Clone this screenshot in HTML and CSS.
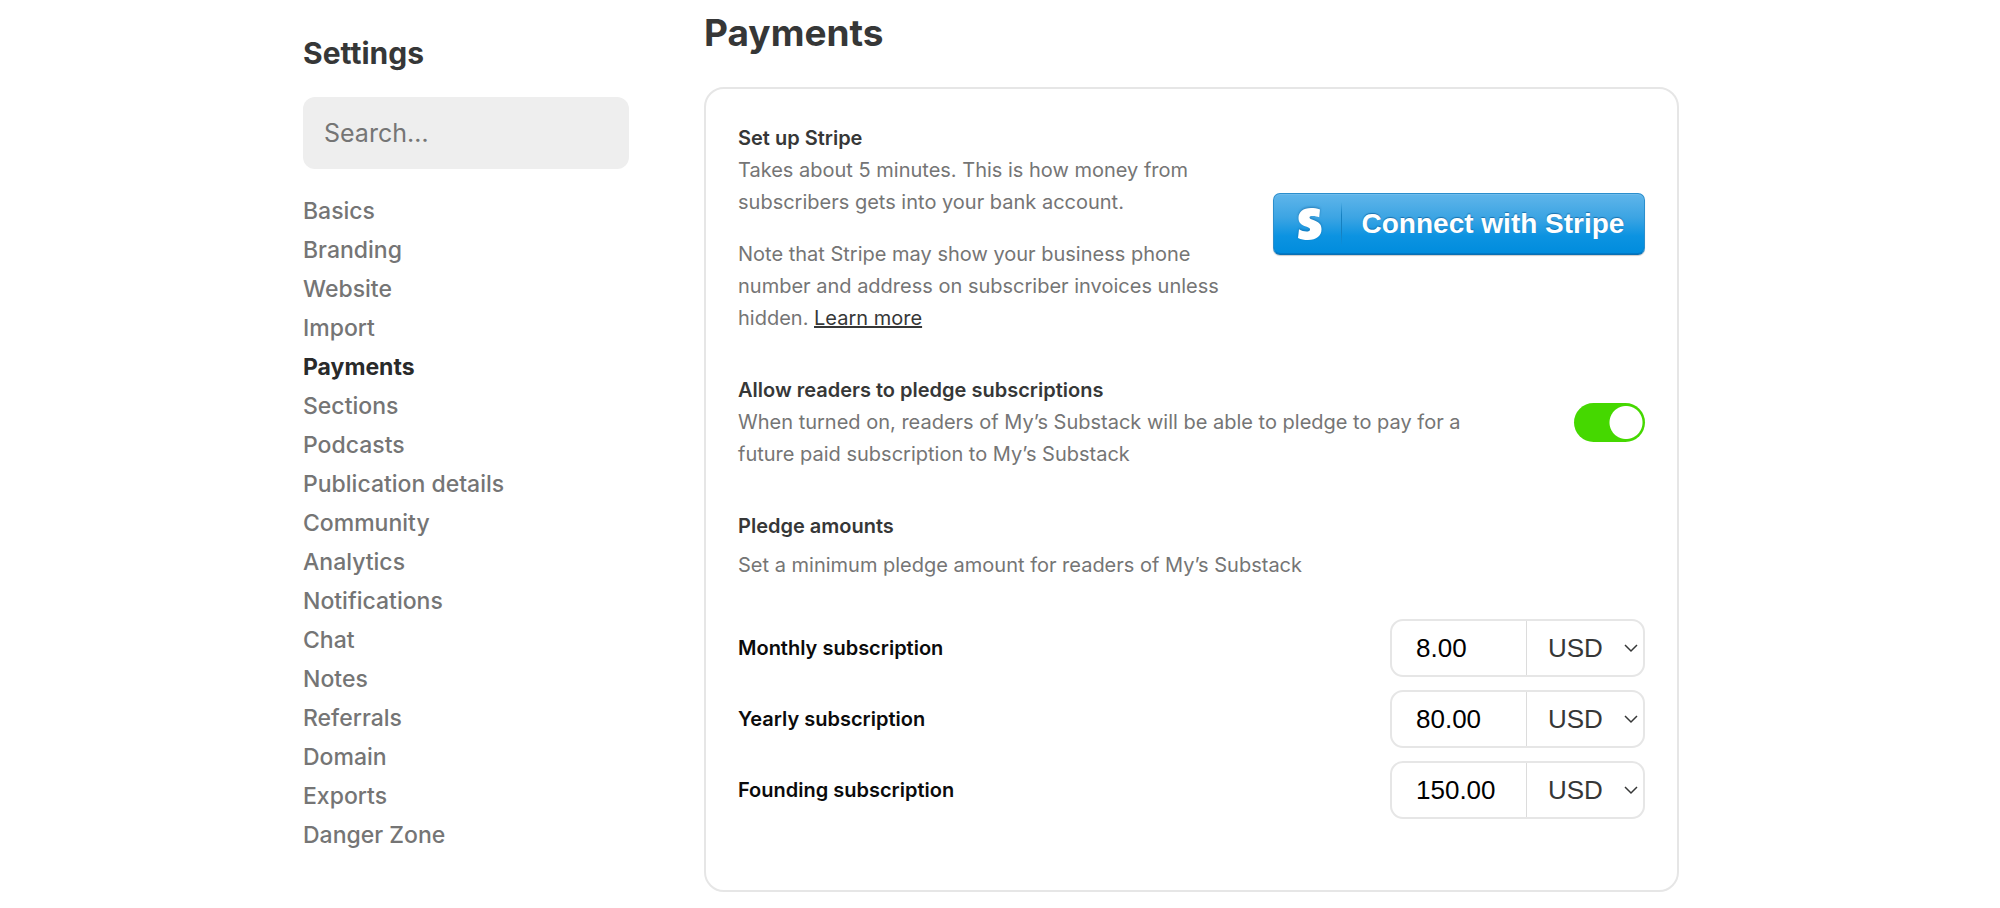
FILE: index.html
```html
<!DOCTYPE html>
<html lang="en">
<head>
    <meta charset="UTF-8">
    <meta name="viewport" content="width=device-width, initial-scale=1.0">
    <title>Payments - Settings</title>
    <link rel="stylesheet" href="styles.css">
</head>
<body>
    <div class="container">
        <aside class="sidebar">
            <h2>Settings</h2>
            <input class="search" type="search" placeholder="Search…" aria-label="Search settings">
            <nav class="nav">
                <a href="#basics">Basics</a>
                <a href="#branding">Branding</a>
                <a href="#website">Website</a>
                <a href="#import">Import</a>
                <a href="#payments" class="active">Payments</a>
                <a href="#sections">Sections</a>
                <a href="#podcasts">Podcasts</a>
                <a href="#publication">Publication details</a>
                <a href="#community">Community</a>
                <a href="#analytics">Analytics</a>
                <a href="#notifications">Notifications</a>
                <a href="#chat">Chat</a>
                <a href="#notes">Notes</a>
                <a href="#referrals">Referrals</a>
                <a href="#domain">Domain</a>
                <a href="#exports">Exports</a>
                <a href="#danger">Danger Zone</a>
            </nav>
        </aside>

        <main class="content" id="payments">
            <h1>Payments</h1>
            <div class="card">
                <section class="setting">
                    <div class="setting-text">
                        <h3>Set up Stripe</h3>
                        <p>Takes about 5 minutes. This is how money from subscribers gets into your bank account.</p>
                        <p class="note">Note that Stripe may show your business phone number and address on subscriber invoices unless hidden. <a href="#learn">Learn more</a></p>
                    </div>
                    <button type="button" class="stripe-button">
                        <span class="stripe-logo">
                            <svg width="26" height="34" viewBox="0 0 26 34" aria-hidden="true">
                                <path d="M23 2.5 C20 1.2 17 1 14 1 C6 1 1.5 5 1.5 11 C1.5 16 4.500 18 9 19.500 C12 20.500 13 21.200 13 22.500 C13 24 11.500 24.500 9.500 24.500 C7 24.500 4.500 23.700 2 22.300 L1 31 C4 32.400 7 33 11 33 C19.500 33 24.500 29 24.500 22.300 C24.500 17 21.500 15 17 13.300 C14 12.200 12.500 11.800 12.500 10.500 C12.500 9.300 13.800 8.900 15.800 8.900 C18 8.900 20.300 9.500 22.200 10.300 Z" fill="#fff"/>
                            </svg>
                        </span>
                        <span class="stripe-label">Connect with Stripe</span>
                    </button>
                </section>

                <section class="setting">
                    <div class="setting-text">
                        <h3><label for="pledges">Allow readers to pledge subscriptions</label></h3>
                        <p>When turned on, readers of My’s Substack will be able to pledge to pay for a future paid subscription to My’s Substack</p>
                    </div>
                    <input type="checkbox" class="toggle" id="pledges" checked>
                </section>

                <section class="pledge">
                    <h3>Pledge amounts</h3>
                    <p>Set a minimum pledge amount for readers of My’s Substack</p>
                    <div class="amounts">
                        <div class="amount-row">
                            <label for="monthly">Monthly subscription</label>
                            <div class="amount">
                                <input type="text" id="monthly" value="8.00">
                                <div class="currency">
                                    <select aria-label="Monthly currency"><option>USD</option></select>
                                    <svg width="16" height="10" viewBox="0 0 16 10" aria-hidden="true"><path d="M2 2 L8 8 L14 2"/></svg>
                                </div>
                            </div>
                        </div>
                        <div class="amount-row">
                            <label for="yearly">Yearly subscription</label>
                            <div class="amount">
                                <input type="text" id="yearly" value="80.00">
                                <div class="currency">
                                    <select aria-label="Yearly currency"><option>USD</option></select>
                                    <svg width="16" height="10" viewBox="0 0 16 10" aria-hidden="true"><path d="M2 2 L8 8 L14 2"/></svg>
                                </div>
                            </div>
                        </div>
                        <div class="amount-row">
                            <label for="founding">Founding subscription</label>
                            <div class="amount">
                                <input type="text" id="founding" value="150.00">
                                <div class="currency">
                                    <select aria-label="Founding currency"><option>USD</option></select>
                                    <svg width="16" height="10" viewBox="0 0 16 10" aria-hidden="true"><path d="M2 2 L8 8 L14 2"/></svg>
                                </div>
                            </div>
                        </div>
                    </div>
                </section>
            </div>
        </main>
    </div>
</body>
</html>
```

FILE: styles.css
```css
* {
    box-sizing: border-box;
}

body {
    margin: 0;
    padding: 0 18px 0 0;
    font-family: Inter, sans-serif;
    font-size: 20px;
    line-height: 32px;
    background: #fff;
    color: #363737;
}

h1, h2, h3, p {
    margin: 0;
}

.container {
    display: grid;
    grid-template-columns: 326px 1fr;
    gap: 75px;
    max-width: 1376px;
    margin: 0 auto;
}

/* sidebar */
.sidebar {
    padding-top: 33px;
}

.sidebar h2 {
    font-size: 30px;
    line-height: 40px;
}

.search {
    display: block;
    width: 100%;
    height: 72px;
    margin: 24px 0 23px;
    padding: 0 21px;
    border: none;
    border-radius: 12px;
    background: #eee;
    font-family: inherit;
    font-size: 25px;
    color: #363737;
}

.search::placeholder {
    color: #757575;
}

.nav {
    display: flex;
    flex-direction: column;
}

.nav a {
    font-size: 23px;
    line-height: 39px;
    font-weight: 500;
    color: #757575;
    text-decoration: none;
}

.nav a.active {
    font-weight: 700;
    color: #292a2a;
}

/* main column */
.content h1 {
    padding: 12px 0 33px;
    font-size: 37px;
    line-height: 42px;
}

.card {
    display: flex;
    flex-direction: column;
    gap: 40px;
    padding: 33px 32px 71px;
    border: 2px solid #e6e6e6;
    border-radius: 20px;
}

.card h3 {
    font-size: 20px;
    font-weight: 600;
}

.card p {
    color: #757575;
}

.setting {
    display: flex;
    align-items: center;
    justify-content: space-between;
    gap: 40px;
}

.setting-text {
    max-width: 760px;
}

.note {
    padding-top: 20px;
}

.note a {
    color: #363737;
}

.stripe-button {
    display: flex;
    align-items: center;
    flex: none;
    width: 372px;
    height: 62px;
    margin-bottom: 8px;
    padding: 0;
    border: 1px solid #2b8fcd;
    border-bottom-color: #0a70b4;
    border-radius: 7px;
    background: linear-gradient(#5fb5ea, #3ba4e3 40%, #0c93e1 70%, #008cdd);
    box-shadow: inset 0 1px 0 #6fbcec, inset 0 -1px 0 #0079c6, 0 1px 1px rgba(0, 0, 0, 0.2);
    color: #fff;
    cursor: pointer;
}

.stripe-logo {
    display: flex;
    align-items: center;
    justify-content: center;
    width: 68px;
    height: 44px;
    padding-left: 4px;
    background: linear-gradient(transparent, #1580c0 30%, #1580c0 70%, transparent) right / 1px 100% no-repeat;
}

.stripe-logo svg {
    filter: drop-shadow(0 -1px 1px rgba(0, 80, 140, 0.5));
}

.stripe-label {
    flex: 1;
    font-family: "Liberation Sans", Arial, sans-serif;
    font-size: 28px;
    font-weight: 700;
    text-shadow: 0 -1px 1px rgba(0, 80, 140, 0.6);
}

.toggle {
    appearance: none;
    flex: none;
    width: 71px;
    height: 39px;
    margin: 0;
    border-radius: 20px;
    background: radial-gradient(circle at 20px 50%, #fff 16px, #ccc 17px);
    cursor: pointer;
}

.toggle:checked {
    background: radial-gradient(circle at 52px 50%, #fff 16px, #45d800 17px);
}

/* pledge amounts */
.pledge p {
    padding-top: 7px;
}

.amounts {
    display: flex;
    flex-direction: column;
    gap: 13px;
    margin-top: 38px;
}

.amount-row {
    display: flex;
    align-items: center;
    justify-content: space-between;
}

.amount-row label {
    font-weight: 600;
    color: #0b0b0b;
}

.amount {
    display: flex;
    width: 255px;
    height: 58px;
    border: 2px solid #e6e6e6;
    border-radius: 13px;
}

.amount input,
.amount select {
    width: 100%;
    height: 100%;
    border: none;
    background: none;
    font-family: "Liberation Sans", Arial, sans-serif;
    font-size: 26px;
}

.amount input {
    flex: 1;
    min-width: 0;
    padding: 0 24px;
    color: #000;
}

.currency {
    position: relative;
    width: 117px;
    border-left: 1px solid #dcdcdc;
}

.amount select {
    appearance: none;
    padding: 0 21px;
    color: #363737;
}

/* chevron sits over the select */
.currency svg {
    position: absolute;
    right: 4px;
    top: 22px;
    fill: none;
    stroke: #363737;
    stroke-width: 1.5;
    pointer-events: none;
}
```
